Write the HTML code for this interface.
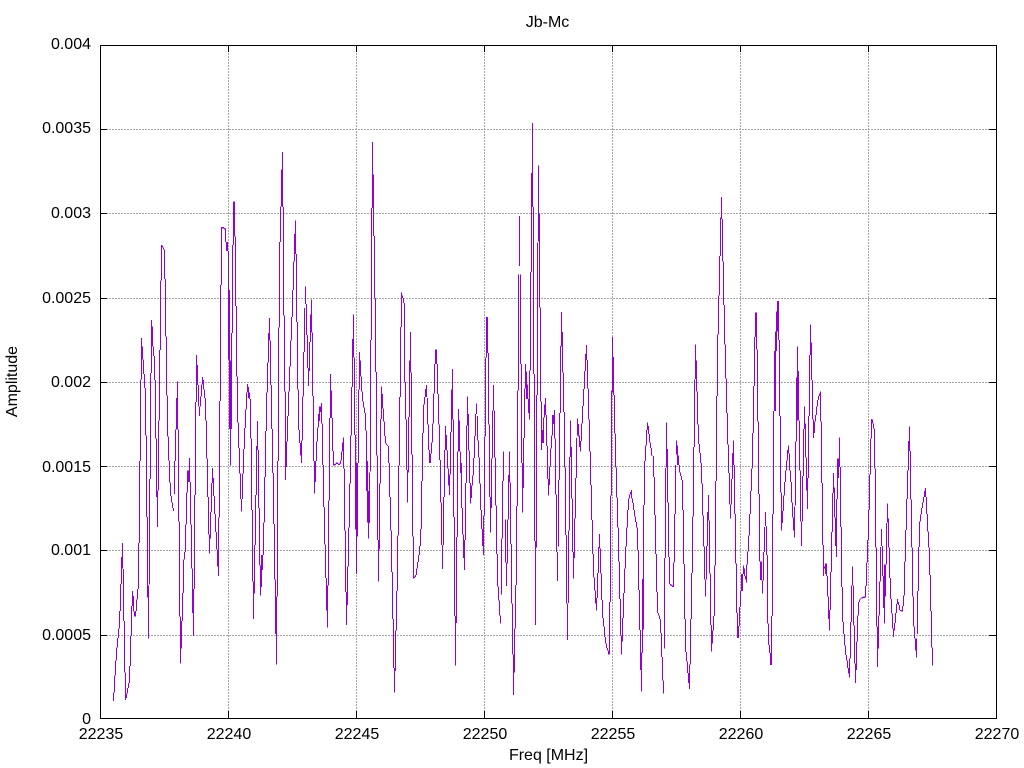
<!DOCTYPE html>
<html>
<head>
<meta charset="utf-8">
<style>
html,body{margin:0;padding:0;background:#fff}
svg{display:block}
text{font-family:"Liberation Sans",sans-serif;font-size:16px;fill:#000}
</style>
</head>
<body>
<svg width="1024" height="768" viewBox="0 0 1024 768" xmlns="http://www.w3.org/2000/svg">
<rect width="1024" height="768" fill="#fff"/>
<g stroke="#a8a8a8" stroke-width="1" stroke-dasharray="2 1" shape-rendering="crispEdges" fill="none">
<path d="M100 129.5H996M100 213.5H996M100 298.5H996M100 382.5H996M100 466.5H996M100 550.5H996M100 635.5H996"/>
<path d="M228.5 718V45M356.5 718V45M484.5 718V45M612.5 718V45M740.5 718V45M868.5 718V45"/>
</g>
<g fill="none" stroke="#9400d3" stroke-width="3" shape-rendering="crispEdges">
<path transform="translate(100,130) scale(.33333,.37628)" d="M40 1517V1495M43 1495V1450M46 1450V1410M49 1410V1375M52 1375V1350M55 1350V1325M58 1325V1278M61 1278V1207M64 1207V1135M67 1165V1098M70 1167V1305M73 1305V1442M76 1442V1515M79 1510V1497M82 1497V1483M85 1483V1470M88 1470V1424M91 1424V1345M94 1345V1265M97 1265V1225M100 1238V1280M103 1280V1293M106 1293V1278M109 1278V1248M112 1248V1220M115 1220V1098M118 1098V880M121 880V663M124 663V553M127 575V610M130 610V648M133 648V686M136 686V812M139 812V1028M142 1028V1243M145 1210V1352M148 1208V928M151 928V646M154 646V505M157 522V575M160 575V600M163 600V665M166 665V820M169 820V975M172 958V1055M175 958V772M178 772V585M181 585V400M184 400V305M187 307V312M190 312V318M193 318V396M196 396V549M199 549V706M202 706V815M205 815V878M208 878V937M211 937V973M214 973V990M217 990V1005M220 1005V1012M223 968V880M226 880V796M229 796V712M232 668V796M235 796V1041M238 1041V1293M241 1293V1418M244 1378V1305M247 1305V1230M250 1230V1142M253 1142V1122M256 1122V1048M259 1048V963M262 963V905M265 905V935M268 872V935M271 935V1048M274 1048V1165M277 1165V1283M280 1220V1345M283 1220V970M286 970V723M289 723V598M292 625V678M295 678V735M298 735V760M301 735V708M304 708V677M307 677V657M310 665V690M313 690V712M316 712V772M319 772V873M322 873V975M325 975V1075M328 1075V1126M331 1085V1015M334 1015V938M337 938V898M340 925V973M343 973V1020M346 1020V1068M349 1068V1115M352 1115V1160M355 1030V1185M358 1030V720M361 720V412M364 412V258M367 258V262M370 258V262M373 260V264M376 262V298M379 298V322M382 298V322M385 322V610M388 425V795M391 612V892M394 795V540M397 540V305M400 305V190M403 190V283"/>
<path transform="translate(235,130) scale(.33333,.37628)" d="M1 283V468M4 468V655M7 655V778M10 778V845M13 845V913M16 913V980M19 980V1014M22 980V913M25 913V848M28 848V792M31 792V743M34 743V698M37 698V675M40 683V712M43 698V715M46 715V820M49 820V1010M52 1010V1200M55 1200V1299M58 1232V1103M61 1103V970M64 970V840M67 850V773M70 850V1005M73 1005V1158M76 1158V1237M79 1215V1130M82 1170V1130M85 1130V1043M88 1043V922M91 922V800M94 800V698M97 698V618M100 618V540M103 500V560M106 560V678M109 678V795M112 795V912M115 912V1047M118 1047V1195M121 1195V1340M124 1240V1421M127 1240V880M130 880V525M133 525V298M136 298V203M139 203V105M142 58V205M145 205V493M148 493V695M151 695V930M154 895V828M157 828V760M160 760V695M163 695V628M166 628V560M169 560V497M172 497V425M175 425V350M178 350V277M181 240V330M184 330V510M187 510V690M190 690V797M193 797V832M196 832V865M199 825V885M202 825V708M205 708V590M208 590V473M211 416V462M214 462V545M217 545V632M220 632V680M223 640V563M226 563V490M229 450V538M232 538V707M235 707V880M238 880V966M241 935V880M244 880V828M247 828V790M250 790V755M253 773V735M256 735V750M259 725V780M262 780V890M265 890V1002M268 1002V1102M271 1102V1190M274 1190V1277M277 1210V1322M280 1210V985M283 985V765M286 765V648M289 692V765M292 765V853M295 853V892M298 892V888M301 890V886M304 888V884M307 888V884M310 890V886M313 890V886M316 888V878M319 878V855M322 855V830M325 817V900M328 900V1065M331 1065V1228M334 1228V1315M337 1262V1160M340 1160V1057M343 1057V940M346 940V812M349 812V683M352 683V555M355 490V605M358 605V810M361 810V1062M364 885V1180M367 1080V885M370 885V690M373 690V590M376 612V655M379 655V695M382 695V722M385 722V737M388 737V752M391 752V798M394 798V960M397 880V1043M400 960V1085M403 1045V910"/>
<path transform="translate(370,130) scale(.33333,.37628)" d="M1 908V558M4 558V207M7 207V32M10 118V282M13 282V447M16 447V643M19 643V865M22 865V1090M25 1090V1200M28 1115V940M31 940V768M34 768V682M37 702V740M40 740V775M43 775V813M46 813V833M49 833V837M52 837V840M55 840V885M58 885V975M61 975V1065M64 1065V1175M67 1175V1300M70 1300V1430M73 1430V1495M76 1438V1330M79 1330V1225M82 1225V1078M85 1078V892M88 892V710M91 710V523M94 523V432M97 440V447M100 447V460M103 460V670M106 670V770M109 770V903M112 903V990M115 910V763M118 763V613M121 537V645M124 645V863M127 863V1080M130 1080V1192M133 1186V1190M136 1188V1183M139 1183V1165M142 1165V1148M145 1148V1130M148 1130V1105M151 1105V1060M154 1060V933M157 933V805M160 805V730M163 730V710M166 710V688M169 710V678M172 712V782M175 782V850M178 850V885M181 885V860M184 860V830M187 830V780M190 780V700M193 700V622M196 622V583M199 583V622M202 622V702M205 702V782M208 782V877M211 877V990M214 990V1103M217 1103V1167M220 1103V975M223 975V850M226 850V787M229 810V852M232 852V900M235 900V945M238 915V970M241 915V803M244 803V690M247 635V770M250 770V1028M253 1028V1292M256 1292V1423M259 1310V1082M262 1082V855M265 855V742M268 772V855M271 855V912M274 885V1005M278 1005V1075M281 1075V1137M284 1090V1170M287 1090V938M290 938V785M293 785V708M296 755V852M299 852V938M302 938V993M305 945V978M308 918V945M311 918V872M314 872V813M317 813V755M320 755V727M323 760V825M326 825V870M329 870V940M332 940V1010M335 1010V1060M338 1060V1105M341 1025V1130M344 1025V815M347 815V605M350 605V497M353 497V593M356 593V783M359 783V975M362 975V1070M365 1005V873M368 873V745M371 745V678M373 745V870M376 870V998M379 998V1127M382 1127V1213M385 1213V1250M388 1250V1290M391 1290V1312M394 1235V1085M397 1085V933M400 933V855"/>
<path transform="translate(505,110) scale(.33333,.37628)" d="M1 1088V1203M4 1203V1265M7 1205V1088M10 1088V970M13 908V990M16 990V1153M19 1153V1312M22 1312V1447M25 1447V1555M28 1495V1378M31 1378V1262M34 1262V1052M37 1052V745M40 745V437M43 282V415M46 437V675M49 675V938M52 938V1070M55 1005V872M58 872V740M61 740V675M64 695V768M67 730V768M70 768V805M73 823V692M76 692V430M79 430V168M82 35V258M85 258V702M88 702V1145M91 1145V1368M94 1163V757M97 757V352M100 147V350M103 275V525M106 525V775M109 775V903M112 850V885M115 885V817M118 817V782M121 765V810M124 810V893M127 893V980M130 980V1025M133 997V948M136 948V900M139 900V865M142 865V810M145 835V810M148 797V873M151 873V1022M154 1022V1175M157 1175V1252M160 1160V983M163 983V805M166 805V627M169 537V628M172 590V697M175 697V802M178 802V950M181 950V1130M184 1130V1312M187 1312V1408M190 1310V1118M193 1118V922M196 825V922M199 895V1033M202 1033V1175M205 1175V1245M208 1190V1085M211 1085V978M214 978V872M217 820V865M220 835V868M223 865V895M226 908V880M229 880V833M232 833V787M235 787V742M238 742V693M241 693V648M244 625V665M247 665V740M250 740V822M253 822V907M256 907V997M259 997V1090M262 1090V1180M265 1180V1243M268 1243V1277M271 1277V1312M274 1297V1330M277 1297V1230M280 1230V1162M283 1127V1165M286 1165V1232M289 1232V1302M292 1302V1350M295 1350V1373M298 1373V1400M301 1400V1418M304 1418V1430M307 1430V1437M310 1437V1447M313 1447V1308M316 1308V1025M319 1025V745M322 603V750M325 657V757M328 757V860M331 860V950M334 950V1030M337 1030V1110M340 1110V1200M343 1200V1300M346 1300V1397M349 1397V1447M352 1412V1350M355 1350V1283M358 1283V1218M361 1218V1160M364 1160V1110M367 1110V1063M370 1063V1033M373 1033V1022M376 1022V1015M379 1010V1033M382 1033V1045M385 1045V1063M388 1063V1080M391 1080V1095M394 1095V1110M397 1110V1170M400 1170V1275M403 1275V1382M406 1382V1487M409 1442V1545M412 1442V1380M415 1380V1050M418 1050V933"/>
<path transform="translate(640,130) scale(.33333,.37628)" d="M1 1330V1435M4 1390V1490M7 1390V1193M10 1193V997M13 997V880M16 880V838M19 838V797M22 777V797M25 787V808M28 808V830M31 830V845M34 845V865M37 865V867M40 867V922M43 922V1023M46 1023V1127M49 1127V1228M52 1228V1283M55 1283V1290M58 1290V1300M61 1300V1337M64 1337V1400M67 1400V1463M70 1463V1498M73 1378V1137M76 1137V898M79 777V897M82 848V990M85 990V1135M88 1135V1207M91 1207V1210M94 1208V1212M97 1210V1214M100 1215V1150M103 1150V1020M106 1020V890M109 825V862M112 838V890M115 865V890M118 890V910M121 910V920M124 920V930M127 930V1010M130 1010V1153M133 1153V1300M136 1300V1387M139 1387V1413M142 1413V1443M145 1443V1470M148 1420V1485M151 1420V1300M154 1300V1177M157 1177V1027M160 1027V842M163 842V663M166 570V662M169 612V695M172 695V782M175 782V835M178 835V858M181 858V885M184 885V940M187 940V1025M190 1025V1107M193 1107V1195M196 1195V1240M199 1195V1105M202 1105V1015M205 970V1038M208 1038V1178M211 1178V1315M214 1315V1386M217 1365V1330M220 1330V1292M223 1292V1158M226 1158V933M229 933V707M232 707V543M235 543V440M238 440V335M241 335V232M244 178V237M247 237V350M250 350V465M253 465V570M256 570V660M259 660V752M262 752V836M265 836V912M268 912V995M271 995V1033M274 995V928M277 928V858M280 825V890M283 890V1020M286 1020V1152M289 1152V1283M292 1283V1350M295 1350V1318M298 1318V1268M301 1268V1225M304 1225V1180M307 1225V1180M310 1157V1180M313 1165V1185M316 1185V1195M319 1203V1155M322 1155V1120M325 1120V1078M328 1078V1020M331 1020V960M334 960V900M337 900V805M340 805V680M343 680V550M346 550V485M349 485V583M352 583V775M355 775V968M358 968V1147M361 1147V1196M364 1147V1197M367 1197V1232M370 1197V1122M373 1122V1055M376 1015V1052M379 1052V1130M382 1130V1312M385 1312V1368M388 1368V1390M391 1390V1422M394 1422V1292M397 1292V1020M400 1020V747M403 747V587M406 587V535M409 535V482M412 482V455"/>
<path transform="translate(775,130) scale(.33333,.37628)" d="M1 747V587M4 587V535M7 535V482M10 455V558M13 558V760M16 760V963M19 963V1065M22 1012V1045M25 1012V972M28 972V935M31 935V905M34 905V878M37 878V850M40 838V860M43 860V905M46 905V935M49 935V990M52 990V1030M55 1030V1065M58 1000V1083M61 998V828M64 828V658M67 575V772M70 640V772M73 772V905M76 905V1040M79 1040V1105M82 1040V920M85 920V795M88 735V795M91 780V870M94 870V958M97 925V1007M100 925V760M103 760V598M106 517V598M109 565V665M112 665V770M115 770V818M118 805V775M121 775V757M124 757V735M127 735V718M130 718V707M133 707V700M136 695V775M139 775V938M142 938V1103M145 1103V1185M148 1165V1160M151 1180V1152M154 1152V1185M157 1185V1240M160 1240V1300M163 1275V1330M166 1275V1175M169 1175V1068M172 1068V965M175 912V965M178 950V1030M181 1030V1105M184 1135V980M187 980V873M190 873V925M193 817V895M196 895V1055M199 1055V1215M202 1215V1308M205 1308V1340M208 1340V1370M211 1370V1395M214 1395V1410M217 1410V1430M220 1430V1445M223 1405V1455M226 1405V1308M229 1308V1210M232 1160V1210M235 1210V1317M238 1317V1418M241 1418V1470M244 1435V1360M247 1360V1290M250 1290V1255M253 1255V1248M256 1248V1245M259 1245V1243M262 1245V1241M265 1244V1240M268 1244V1240M271 1242V1212M274 1212V1150M277 1150V1090M280 1090V1010M283 1010V915M286 915V820M289 820V768M292 770V780M295 780V793M298 793V900M301 900V1110M304 1110V1320M307 1320V1427M310 1378V1290M313 1290V1200M316 1200V1108M319 1060V1105M322 1105V1185M325 1185V1270M328 1312V1155M331 1240V1155M334 1155V1045M337 992V1043M340 1032V1110M343 1110V1190M346 1190V1247M349 1247V1285M352 1285V1325M355 1325V1347M358 1330V1310M361 1310V1283M364 1283V1260M367 1247V1260M370 1255V1262M373 1262V1275M376 1275V1278M379 1276V1280M382 1280V1265M385 1265V1237M388 1237V1147M391 1147V1063M394 1063V980M397 980V905M400 905V827M403 788V853M406 853V982M409 982V1110M412 1110V1240M415 1240V1320M418 1320V1352M421 1352V1383M424 1352V1402M427 1340V1225M430 1225V1108M433 1108V1040M436 1040V1022M439 1022V1005M442 1005V990M445 990V975M448 975V960M451 952V975M454 975V1020M457 1020V1067M460 1067V1110M463 1110V1183M466 1183V1278M469 1278V1375M472 1375V1423"/>
</g>
<g stroke="#000" stroke-width="1" shape-rendering="crispEdges" fill="none">
<rect x="100.5" y="45.5" width="896" height="673"/>
<path d="M100 129.5h7M100 213.5h7M100 298.5h7M100 382.5h7M100 466.5h7M100 550.5h7M100 635.5h7M996 129.5h-7M996 213.5h-7M996 298.5h-7M996 382.5h-7M996 466.5h-7M996 550.5h-7M996 635.5h-7"/>
<path d="M228.5 718v-7M356.5 718v-7M484.5 718v-7M612.5 718v-7M740.5 718v-7M868.5 718v-7M228.5 45v7M356.5 45v7M484.5 45v7M612.5 45v7M740.5 45v7M868.5 45v7"/>
</g>
<g text-anchor="end">
<text x="91" y="49">0.004</text>
<text x="91" y="133">0.0035</text>
<text x="91" y="218">0.003</text>
<text x="91" y="303">0.0025</text>
<text x="91" y="387">0.002</text>
<text x="91" y="472">0.0015</text>
<text x="91" y="555">0.001</text>
<text x="91" y="640">0.0005</text>
<text x="91" y="724">0</text>
</g>
<g text-anchor="middle">
<text x="101" y="739">22235</text>
<text x="229" y="739">22240</text>
<text x="357" y="739">22245</text>
<text x="485" y="739">22250</text>
<text x="613" y="739">22255</text>
<text x="741" y="739">22260</text>
<text x="869" y="739">22265</text>
<text x="997" y="739">22270</text>
<text x="548.5" y="760">Freq [MHz]</text>
<text x="547.5" y="27">Jb-Mc</text>
<text transform="translate(17,381.5) rotate(-90)">Amplitude</text>
</g>
</svg>
</body>
</html>
